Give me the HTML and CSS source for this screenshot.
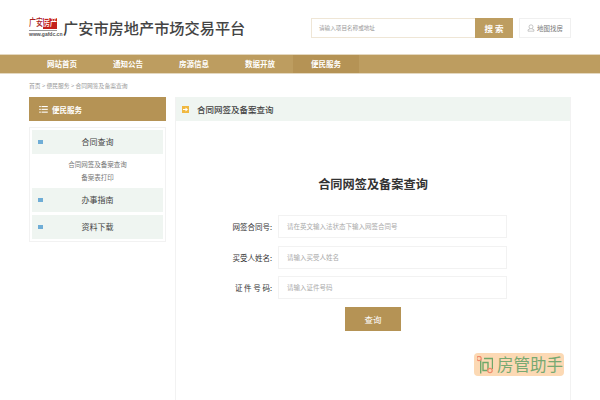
FILE: index.html
```html
<!DOCTYPE html>
<html lang="zh-CN">
<head>
    <meta charset="UTF-8">
    <title>合同网签及备案查询</title>
    <link rel="stylesheet" href="styles.css">
</head>
<body>
    <div class="top">
        <div class="logo-box">
            <div class="logo">
                <div class="logo-words">
                    <div class="logo-red"><b>广安</b></div>
                    <div class="logo-tag"><b>房产</b></div>
                </div>
                <div class="logo-url">www.gafdc.cn</div>
            </div>
            <div class="site-name">广安市房地产市场交易平台</div>
        </div>
        <div class="search">
            <div class="search-input">请输入项目名称或地址</div>
            <div class="search-btn">搜 索</div>
        </div>
        <div class="map-btn">
            <svg class="map-icon" width="12" height="12" viewBox="0 0 12 12" fill="none" stroke="#999" stroke-width="0.8">
                <circle cx="6" cy="4.2" r="3"/>
                <path d="M4.6 7.2 A5 3 0 0 0 1.5 10.8 H10.5 A5 3 0 0 0 7.4 7.2"/>
            </svg>
            地图找房
        </div>
    </div>

    <div class="nav">
        <div class="nav-inner">
            <a class="nav-item">网站首页</a>
            <a class="nav-item">通知公告</a>
            <a class="nav-item">房源信息</a>
            <a class="nav-item">数据开放</a>
            <a class="nav-item active">便民服务</a>
        </div>
    </div>

    <div class="crumbs">首页 &gt; 便民服务 &gt; 合同网签及备案查询</div>

    <div class="content">
        <div class="side">
            <div class="side-title">
                <svg width="11" height="9" viewBox="0 0 11 9" fill="#fff">
                    <rect x="0" y="0" width="2" height="1.4"/><rect x="3" y="0" width="8" height="1.4"/>
                    <rect x="0" y="3.6" width="2" height="1.4"/><rect x="3" y="3.6" width="8" height="1.4"/>
                    <rect x="0" y="7.2" width="2" height="1.4"/><rect x="3" y="7.2" width="8" height="1.4"/>
                </svg>
                便民服务
            </div>
            <div class="side-list">
                <div class="side-item"><i class="dot"></i>合同查询</div>
                <div class="side-sub">
                    <a>合同网签及备案查询</a>
                    <a>备案表打印</a>
                </div>
                <div class="side-item"><i class="dot"></i>办事指南</div>
                <div class="side-item"><i class="dot"></i>资料下载</div>
            </div>
        </div>

        <div class="main">
            <div class="main-title">
                <svg class="arrow-box" width="7" height="7" viewBox="0 0 7 7">
                    <rect width="7" height="7" fill="#f0b840"/>
                    <path d="M1 3 H3.5 V1.5 L6 3.5 L3.5 5.5 V4 H1 Z" fill="#fff"/>
                </svg>
                合同网签及备案查询
            </div>
            <div class="main-body">
                <h2 class="form-title">合同网签及备案查询</h2>
                <div class="row">
                    <label>网签合同号:</label>
                    <div class="field">请在英文输入法状态下输入网签合同号</div>
                </div>
                <div class="row">
                    <label>买受人姓名:</label>
                    <div class="field">请输入买受人姓名</div>
                </div>
                <div class="row">
                    <label>证 件 号 码:</label>
                    <div class="field">请输入证件号码</div>
                </div>
                <div class="query-btn">查询</div>
            </div>
        </div>
    </div>

    <div class="stamp">
        <svg width="16" height="18" viewBox="0 0 16 18" fill="none">
            <path d="M3.7 2.5 V17.5 M7 2.5 H15.5 V13 M6 6.5 H11 V14.5 H6 Z" stroke="#6fa86a" stroke-width="1.4"/>
            <circle cx="2" cy="2.5" r="2.2" fill="#fcd9b4" stroke="#f0896a" stroke-width="1.2"/>
            <circle cx="13" cy="14.5" r="2.2" fill="#fcd9b4" stroke="#f0896a" stroke-width="1.2"/>
        </svg>
        <span>房管助手</span>
    </div>
</body>
</html>
```

FILE: styles.css
```css
* {
    box-sizing: border-box;
}

html, body {
    height: 400px;
    overflow: hidden;
}

body {
    margin: 0;
    background-color: #fff;
    font-family: "Noto Sans CJK SC", "Liberation Sans", sans-serif;
    color: #333;
    position: relative;
}

.top {
    display: flex;
    align-items: center;
    height: 54px;
    padding: 0 29px;
}

.logo-box {
    display: flex;
    align-items: center;
    width: 282px;
    margin-top: 1px;
}

.logo {
    width: 28px;
    margin-right: 6px;
}

.logo-words {
    display: flex;
    height: 11px;
    font-size: 7px;
    line-height: 7px;
}

.logo-red, .logo-tag {
    width: 14px;
    white-space: nowrap;
}

.logo-red b, .logo-tag b {
    display: block;
    font-weight: 500;
    transform: scaleY(1.4);
    transform-origin: top;
}

.logo-red {
    color: #a8201c;
}

.logo-tag {
    background-color: #c4211c;
    color: #fff;
}

.logo-url {
    margin-top: 1px;
    border-top: 1px solid #999;
    font-family: "Liberation Sans", sans-serif;
    font-size: 5px;
    font-weight: 700;
    line-height: 6px;
    color: #555;
    white-space: nowrap;
}

.site-name {
    margin-top: -2px;
    font-size: 15.2px;
    font-weight: 500;
    color: #444;
    white-space: nowrap;
}

.search {
    display: flex;
    width: 202px;
    height: 20px;
    border: 1px solid #efe6d6;
    margin-top: 2px;
}

.search-input {
    flex: 1;
    padding-left: 7px;
    font-size: 5.6px;
    line-height: 18px;
    color: #999;
}

.search-btn {
    width: 38px;
    margin: -1px;
    background-color: #bd9d60;
    color: #fff;
    text-align: center;
    font-size: 8.5px;
    font-weight: 700;
    line-height: 20px;
}

.map-btn {
    display: flex;
    align-items: center;
    justify-content: center;
    gap: 2px;
    width: 52px;
    height: 20px;
    margin-left: 6px;
    margin-top: 2px;
    border: 1px solid #f0f0f0;
    font-size: 6.5px;
    color: #777;
}

.map-icon {
    width: 8px;
    height: 8px;
}

.nav {
    height: 20px;
    background-color: #bd9d60;
    border-top: 1px solid #e4d8c0;
    border-bottom: 1px solid #e4d8c0;
}

.nav-inner {
    display: flex;
    padding-left: 29px;
}

.nav-item {
    width: 66px;
    text-align: center;
    color: #fff;
    font-size: 7.5px;
    font-weight: 700;
    line-height: 18px;
}

.nav-item.active {
    background-color: #b59355;
}

.crumbs {
    padding: 7px 29px 0;
    height: 23px;
    font-size: 5.8px;
    line-height: 9px;
    color: #999;
}

.content {
    display: flex;
    gap: 9px;
    padding: 0 29px;
}

/* left column */
.side {
    width: 137px;
}

.side-title {
    display: flex;
    align-items: center;
    gap: 4px;
    height: 24px;
    padding-left: 10px;
    background-color: #b59355;
    color: #fff;
    font-size: 7.5px;
    font-weight: 700;
}

.side-title svg {
    width: 9px;
    height: 7px;
}

.side-list {
    margin-top: 6px;
    padding: 2px;
    border: 1px solid #f2f2f2;
}

.side-item {
    position: relative;
    height: 24px;
    margin-bottom: 2px;
    background-color: #eff5f1;
    text-align: center;
    font-size: 8px;
    line-height: 24px;
    color: #444;
}

.side-sub + .side-item {
    margin-bottom: 3px;
}

.side-item:last-child {
    margin-bottom: 0;
}

.dot {
    position: absolute;
    left: 6px;
    top: 10px;
    width: 5px;
    height: 4px;
    background-color: #6fadd6;
}

.side-sub {
    height: 34px;
    margin-top: -2px;
    padding-top: 4px;
    text-align: center;
    font-size: 6.5px;
    line-height: 13px;
    color: #777;
}

.side-sub a {
    display: block;
}

/* right column */
.main {
    width: 396px;
    height: 320px;
    border-left: 1px solid #f2f2f2;
    border-right: 1px solid #f2f2f2;
}

.main-title {
    display: flex;
    align-items: center;
    height: 24px;
    padding-left: 6px;
    background-color: #eff5f1;
    font-size: 8.5px;
    font-weight: 500;
    color: #444;
}

.arrow-box {
    margin-right: 8px;
}

.main-body {
    display: flex;
    flex-direction: column;
    align-items: center;
}

.form-title {
    margin: 54px 0 22px;
    font-size: 12.2px;
    font-weight: 700;
    line-height: 18px;
    color: #333;
}

.row {
    display: flex;
    align-items: center;
    width: 394px;
    height: 23px;
    margin-bottom: 7.5px;
}

.row label {
    width: 96px;
    text-align: right;
    font-size: 7.5px;
    color: #333;
    white-space: pre;
}

.field {
    width: 229px;
    height: 23px;
    margin-left: 6px;
    padding-left: 8px;
    border: 1px solid #f2f2f2;
    font-size: 6.5px;
    line-height: 21px;
    color: #aaa;
}

.query-btn {
    width: 56px;
    height: 24px;
    background-color: #b59355;
    color: #fff;
    text-align: center;
    font-size: 8.5px;
    line-height: 24px;
}

/* watermark over the page corner */
.stamp {
    position: absolute;
    left: 474px;
    top: 353px;
    display: flex;
    align-items: center;
    gap: 4px;
    width: 90px;
    height: 23px;
    padding-left: 3px;
    border-radius: 4px;
    background-color: #fcd9b4;
    font-size: 16.5px;
    line-height: 23px;
    color: #78a972;
}
```
